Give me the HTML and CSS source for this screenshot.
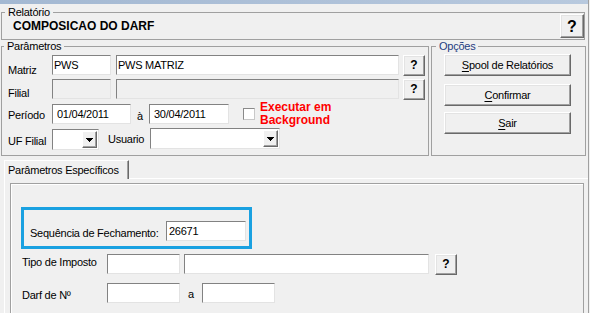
FILE: index.html
```html
<!DOCTYPE html>
<html lang="pt-BR">
<head>
  <meta charset="UTF-8" />
  <title>Relatório - Composicao do DARF</title>
  <link rel="stylesheet" href="styles.css">
</head>
<body>
<div class="window">
  <div class="caption"></div>

  <fieldset class="grp grp-report">
    <legend>Relatório</legend>
    <div class="report-row">
      <span class="report-title">COMPOSICAO DO DARF</span>
      <button class="btn btn-help-big">?</button>
    </div>
  </fieldset>

  <div class="mid">
    <fieldset class="grp grp-params">
      <legend>Parâmetros</legend>

      <div class="row row-1">
        <span class="lbl">Matriz</span>
        <input class="field w-code" type="text" value="PWS" />
        <input class="field w-name" type="text" value="PWS MATRIZ" />
        <button class="btn btn-help">?</button>
      </div>

      <div class="row row-2">
        <span class="lbl">Filial</span>
        <input class="field w-code" type="text" value="" disabled />
        <input class="field w-name" type="text" value="" disabled />
        <button class="btn btn-help">?</button>
      </div>

      <div class="row row-3">
        <span class="lbl">Período</span>
        <input class="field date w-date1" type="text" value="01/04/2011" />
        <span class="sep">à</span>
        <input class="field date w-date2" type="text" value="30/04/2011" />
        <span class="check"></span>
        <span class="warn">Executar em<br>Background</span>
      </div>

      <div class="row row-4">
        <span class="lbl">UF Filial</span>
        <div class="combo combo-uf"><span class="combo-btn"><svg width="7" height="4" viewBox="0 0 7 4"><path d="M0 0h7v1h-1v1h-1v1h-1v1h-1v-1h-1v-1h-1v-1h-1z" fill="#000"/></svg></span></div>
        <span class="lbl-user">Usuario</span>
        <div class="combo combo-user"><span class="combo-btn"><svg width="7" height="4" viewBox="0 0 7 4"><path d="M0 0h7v1h-1v1h-1v1h-1v1h-1v-1h-1v-1h-1v-1h-1z" fill="#000"/></svg></span></div>
      </div>
    </fieldset>

    <fieldset class="grp grp-options">
      <legend>Opções</legend>
      <button class="btn btn-opt opt-spool"><u>S</u>pool de Relatórios</button>
      <button class="btn btn-opt opt-confirm"><u>C</u>onfirmar</button>
      <button class="btn btn-opt opt-exit"><u>S</u>air</button>
    </fieldset>
  </div>

  <div class="tabs">
    <span class="tab">Parâmetros Específicos</span>
  </div>
  <div class="sheet">
    <div class="panel">
      <div class="highlight">
        <span class="lbl-seq">Sequência de Fechamento:</span>
        <input class="field w-seq" type="text" value="26671" />
      </div>

      <div class="row row-tax">
        <span class="lbl-wide">Tipo de Imposto</span>
        <input class="field w-small" type="text" value="" />
        <input class="field w-desc" type="text" value="" />
        <button class="btn btn-help">?</button>
      </div>

      <div class="row row-darf">
        <span class="lbl-wide">Darf de Nº</span>
        <input class="field w-small" type="text" value="" />
        <span class="sep-a">a</span>
        <input class="field w-small" type="text" value="" />
      </div>
    </div>
  </div>
</div>
</body>
</html>
```

FILE: styles.css
```css
* { box-sizing: border-box; }
body {
  margin: 0;
  background: #f0f0f0;
  color: #000;
  font: 11px/13px "Liberation Sans", Arial, sans-serif;
  letter-spacing: -0.25px;
}
.window {
  width: 589px;
  height: 313px;
  border-right: 1px solid #a0a0a0;
  overflow: hidden;
}
.caption {
  height: 4px;
  background: linear-gradient(to right, #a3b8d2, #b8c9de);
}

/* group boxes */
.grp { margin: 0; padding: 0; border: 1px solid #a0a0a0; min-width: 0; }
.grp legend { padding: 0 3px; line-height: 12px; }
.grp-report { margin: 2px 0 0 1px; width: 584px; height: 34px; }
.grp-report legend { margin-left: 3px; }
.report-row {
  display: flex;
  align-items: center;
  justify-content: space-between;
  height: 24px;
  margin-top: -4px;
  padding-left: 11px;
}
.report-title { font-weight: bold; font-size: 12px; line-height: 14px; letter-spacing: 0; }

.mid { display: flex; }
.grp-params { margin-left: 1px; width: 428px; height: 116px; }
.grp-params legend { margin-left: 2px; }
.grp-options { margin-left: 2px; width: 155px; height: 116px; }
.grp-options legend { margin-left: 4px; color: #1f3d80; }

/* controls */
.btn {
  display: block;
  margin: 0;
  padding: 0;
  background: #f0f0f0;
  color: #000;
  font: inherit;
  letter-spacing: inherit;
  border: 1px solid;
  border-color: #fff #696969 #696969 #fff;
  box-shadow: inset -1px -1px #a0a0a0, inset 1px 1px #e3e3e3;
  text-align: center;
}
.btn-help { width: 22px; height: 21px; font-weight: bold; font-size: 12px; letter-spacing: 0; }
.btn-help-big { width: 24px; height: 24px; font-weight: bold; font-size: 16px; letter-spacing: 0; }
.btn-opt { width: 127px; height: 22px; margin-left: 12px; }
.btn-opt u { text-decoration-thickness: 1px; text-underline-offset: 2px; }
.opt-spool { margin-top: 2px; }
.opt-confirm { margin-top: 8px; }
.opt-exit { margin-top: 6px; }

.field {
  display: block;
  height: 20px;
  margin: 0;
  padding: 0 0 0 1px;
  background: #fff;
  color: #000;
  font: inherit;
  letter-spacing: inherit;
  border: 1px solid;
  border-color: #828282 #e3e3e3 #e3e3e3 #828282;
  outline: none;
}
.field:disabled { background: #f0f0f0; }
.field.date { padding-left: 4px; }

.row { display: flex; align-items: flex-start; }
.lbl { width: 44px; margin-left: 6px; }
.row-1 { margin-top: 3px; }
.row-1 .lbl { margin-top: 9px; }
.row-2 { margin-top: 2px; }
.row-2 .lbl { margin-top: 8px; }
.row-3 { margin-top: 1px; }
.row-3 .lbl { margin-top: 8px; }
.row-3 .field { margin-top: 3px; }
.row-4 { margin-top: 1px; }
.row-4 .lbl { margin-top: 7px; }

.w-code { width: 59px; }
.w-name { width: 283px; margin-left: 5px; }
.row-1 .btn-help, .row-2 .btn-help { margin-left: 4px; }
.w-date1 { width: 79px; }
.w-date2 { width: 80px; }
.sep { width: 18px; padding-left: 6px; margin-top: 9px; }

.check {
  width: 12px;
  height: 12px;
  margin: 7px 0 0 14px;
  background: #fff;
  border: 1px solid;
  border-color: #8a8a8a #c8c8c8 #c8c8c8 #8a8a8a;
}
.warn {
  margin-left: 5px;
  color: #ff0000;
  font-weight: bold;
  font-size: 12px;
  line-height: 13px;
  letter-spacing: 0;
}

.combo {
  display: flex;
  justify-content: flex-end;
  height: 21px;
  padding: 1px;
  background: #fff;
  border: 1px solid;
  border-color: #828282 #e3e3e3 #e3e3e3 #828282;
}
.combo-btn {
  display: flex;
  align-items: center;
  justify-content: center;
  width: 15px;
  background: #f0f0f0;
  border: 1px solid;
  border-color: #fff #696969 #696969 #fff;
  box-shadow: inset -1px -1px #a0a0a0;
}
.combo-btn svg { display: block; shape-rendering: crispEdges; }
.combo-uf { width: 47px; margin-top: 1px; }
.lbl-user { width: 42px; margin: 5px 0 0 9px; }
.combo-user { width: 130px; }

/* tab sheet */
.tabs { margin: 4px 0 0 4px; height: 18px; }
.tab {
  display: inline-block;
  position: relative;
  height: 19px;
  padding: 3px 9px 0 3px;
  background: #f0f0f0;
  border-top: 1px solid #fff;
  border-left: 1px solid #fff;
  border-right: 1px solid #696969;
  box-shadow: inset -1px 0 #a0a0a0;
}
.sheet {
  margin-left: 4px;
  width: 584px;
  height: 140px;
  padding: 4px 0 0 5px;
  border-top: 1px solid #fff;
  border-left: 1px solid #fff;
}
.panel {
  width: 574px;
  height: 140px;
  border: 1px solid #a0a0a0;
  box-shadow: inset 1px 1px #fff;
}
.highlight {
  display: flex;
  align-items: flex-start;
  width: 231px;
  height: 42px;
  margin: 23px 0 0 10px;
  padding-left: 6px;
  border: 3px solid #1aa1e1;
}
.lbl-seq { width: 136px; margin-top: 17px; }
.w-seq { width: 80px; margin-top: 11px; padding-left: 2px; }

.row-tax { margin-top: 5px; }
.row-darf { margin-top: 8px; }
.lbl-wide { width: 85px; margin-left: 11px; }
.row-tax .lbl-wide { margin-top: 2px; }
.row-darf .lbl-wide { margin-top: 6px; }
.w-small { width: 73px; }
.w-desc { width: 245px; margin-left: 4px; }
.row-tax .btn-help { margin-left: 6px; }
.sep-a { width: 22px; padding-left: 8px; margin-top: 5px; }
```
